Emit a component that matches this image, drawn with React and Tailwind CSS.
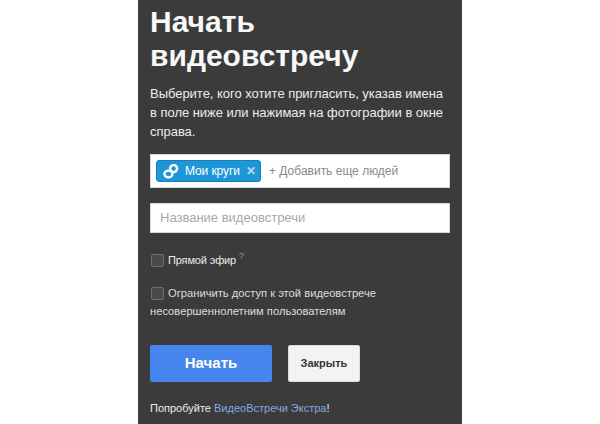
import React from "react";

function CirclesIcon() {
  return (
    <svg width="16" height="15" viewBox="0 0 16 15" fill="none" stroke="white" strokeWidth="2.4">
      <circle cx="10.6" cy="4.6" r="3.5" />
      <ellipse cx="5.4" cy="10" rx="4" ry="3.4" />
    </svg>
  );
}

export default function App() {
  return (
    <div className="w-[600px] h-[424px] bg-white overflow-hidden font-['Liberation_Sans',Arial,sans-serif]">
      <div className="ml-[138px] w-[324px] h-[424px] bg-[#3b3b3b] px-3 pt-[5px] text-white">
        {/* Header */}
        <h1 className="text-[30px] leading-[34px] font-bold text-[#f8f8f8]">
          Начать
          <br />
          видеовстречу
        </h1>

        <p className="mt-[11px] text-[13px] leading-[19px] tracking-[-0.03px] text-[#ececec]">
          Выберите, кого хотите пригласить, указав имена в поле ниже или нажимая на фотографии в окне справа.
        </p>

        {/* People */}
        <div className="mt-[13px] w-[300px] h-[34px] bg-white border border-[#d8d8d8] flex items-center pl-[5px]">
          <div className="h-[22px] w-[105px] bg-[#1e97d8] border border-[#1a7fb8] rounded-[3px] flex items-center pl-[6px] text-white text-[12px]">
            <CirclesIcon />
            <span className="ml-[6px] tracking-[-0.1px]">Мои круги</span>
            <span className="ml-[6px] text-[12px] font-bold text-[#b8def3]">✕</span>
          </div>
          <span className="ml-[8px] text-[12px] text-[#8a8a8a]">+ Добавить еще людей</span>
        </div>

        {/* Name */}
        <div className="mt-[15px] w-[300px] h-[30px] bg-white border border-[#d8d8d8] flex items-center pl-[9px] text-[13px] text-[#a8a8a8]">
          Название видеовстречи
        </div>

        {/* Options */}
        <div className="mt-[19px] flex items-center h-[16px]">
          <span className="ml-px w-[13px] h-[13px] bg-[#4a4a49] border border-[#6e6e6d] rounded-[2px]"></span>
          <span className="ml-[4px] text-[11px] tracking-[-0.15px] text-[#ececec]">Прямой эфир</span>
          <span className="ml-[3px] -mt-[7px] text-[9px] text-[#5aa9f0]">?</span>
        </div>

        <div className="mt-[16px] text-[11.2px] leading-[18px] text-[#dedede]">
          <div className="flex items-center">
            <span className="ml-px w-[13px] h-[13px] bg-[#4a4a49] border border-[#6e6e6d] rounded-[2px]"></span>
            <span className="ml-[4px]">Ограничить доступ к этой видеовстрече</span>
          </div>
          <div>несовершеннолетним пользователям</div>
        </div>

        {/* Buttons */}
        <div className="mt-[25px] flex gap-4">
          <button className="w-[122px] h-[37px] bg-[#4684ee] rounded-[2px] text-[15px] font-bold text-white">
            Начать
          </button>
          <button className="w-[72px] h-[37px] bg-[#f3f3f3] border border-[#dcdcdc] rounded-[2px] text-[11px] font-bold text-[#333333]">
            Закрыть
          </button>
        </div>

        <p className="mt-[18px] text-[11px] text-[#ececec]">
          Попробуйте <span className="text-[#84a8e0]">ВидеоВстречи Экстра</span>!
        </p>
      </div>
    </div>
  );
}
